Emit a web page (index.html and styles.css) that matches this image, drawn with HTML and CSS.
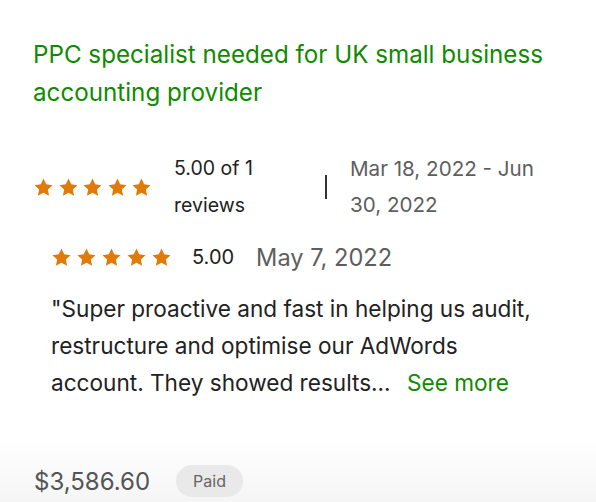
FILE: index.html
```html
<!DOCTYPE html>
<html>
<head>
<meta charset="utf-8">
<link rel="stylesheet" href="styles.css">
</head>
<body>
<div class="card">
  <h1 class="title">PPC specialist needed for UK small business accounting provider</h1>

  <div class="summary">
    <div class="stars stars-lg" aria-label="5 stars">
      <svg viewBox="0 0 24 24"><path d="M12 1.8l3.1 6.6 7.2.9-5.3 5 1.4 7.1L12 17.9l-6.4 3.5 1.4-7.1-5.3-5 7.2-.9z"/></svg>
      <svg viewBox="0 0 24 24"><path d="M12 1.8l3.1 6.6 7.2.9-5.3 5 1.4 7.1L12 17.9l-6.4 3.5 1.4-7.1-5.3-5 7.2-.9z"/></svg>
      <svg viewBox="0 0 24 24"><path d="M12 1.8l3.1 6.6 7.2.9-5.3 5 1.4 7.1L12 17.9l-6.4 3.5 1.4-7.1-5.3-5 7.2-.9z"/></svg>
      <svg viewBox="0 0 24 24"><path d="M12 1.8l3.1 6.6 7.2.9-5.3 5 1.4 7.1L12 17.9l-6.4 3.5 1.4-7.1-5.3-5 7.2-.9z"/></svg>
      <svg viewBox="0 0 24 24"><path d="M12 1.8l3.1 6.6 7.2.9-5.3 5 1.4 7.1L12 17.9l-6.4 3.5 1.4-7.1-5.3-5 7.2-.9z"/></svg>
    </div>
    <div class="score">5.00 of 1 reviews</div>
    <div class="divider"></div>
    <div class="range">Mar 18, 2022 - Jun 30, 2022</div>
  </div>

  <div class="review">
    <div class="review-head">
      <div class="stars stars-sm" aria-label="5 stars">
        <svg viewBox="0 0 24 24"><path d="M12 1.8l3.1 6.6 7.2.9-5.3 5 1.4 7.1L12 17.9l-6.4 3.5 1.4-7.1-5.3-5 7.2-.9z"/></svg>
        <svg viewBox="0 0 24 24"><path d="M12 1.8l3.1 6.6 7.2.9-5.3 5 1.4 7.1L12 17.9l-6.4 3.5 1.4-7.1-5.3-5 7.2-.9z"/></svg>
        <svg viewBox="0 0 24 24"><path d="M12 1.8l3.1 6.6 7.2.9-5.3 5 1.4 7.1L12 17.9l-6.4 3.5 1.4-7.1-5.3-5 7.2-.9z"/></svg>
        <svg viewBox="0 0 24 24"><path d="M12 1.8l3.1 6.6 7.2.9-5.3 5 1.4 7.1L12 17.9l-6.4 3.5 1.4-7.1-5.3-5 7.2-.9z"/></svg>
        <svg viewBox="0 0 24 24"><path d="M12 1.8l3.1 6.6 7.2.9-5.3 5 1.4 7.1L12 17.9l-6.4 3.5 1.4-7.1-5.3-5 7.2-.9z"/></svg>
      </div>
      <span class="rating">5.00</span>
      <span class="date">May 7, 2022</span>
    </div>
    <p class="quote">"Super proactive and fast in helping us audit, restructure and optimise our AdWords account. They showed results... <a class="more" href="#">See more</a></p>
  </div>

  <div class="footer">
    <span class="price">$3,586.60</span>
    <span class="badge">Paid</span>
  </div>
</div>
</body>
</html>
```

FILE: styles.css
```css
html, body {
  margin: 0;
  padding: 0;
  background: #ffffff;
}

body {
  font-family: Inter, "Liberation Sans", Arial, sans-serif;
  color: #222222;
  width: 596px;
  height: 502px;
  overflow: hidden;
}

.card {
  padding: 36px 0 0 33px;
  height: 466px;
  position: relative;
}

.title {
  margin: 0;
  font-size: 24.2px;
  line-height: 38px;
  font-weight: 400;
  color: #108a00;
  width: 545px;
}

.summary {
  display: flex;
  align-items: center;
  margin-top: 38px;
}

.stars {
  display: flex;
}

.stars svg {
  fill: #e07b0a;
  display: block;
}

.stars-lg {
  gap: 3.5px;
  margin-right: 22px;
}

.stars-lg svg,
.stars-sm svg {
  width: 21px;
  height: 21px;
}

.score {
  font-size: 19.5px;
  line-height: 37px;
  width: 128px;
  color: #222222;
}

.divider {
  width: 2px;
  height: 24px;
  background: #333333;
  margin: 0 23px 0 23px;
}

.range {
  font-size: 20.6px;
  line-height: 36px;
  width: 205px;
  color: #5e5e5e;
}

.review {
  padding-left: 18px;
  margin-top: 13px;
}

.review-head {
  display: flex;
  align-items: center;
  height: 40px;
}

.stars-sm {
  gap: 4px;
  margin-right: 20px;
}

.rating {
  font-size: 20px;
  color: #222222;
  margin-right: 22px;
}

.date {
  font-size: 23.6px;
  color: #5e5e5e;
}

.quote {
  margin: 13px 0 0 0;
  font-size: 22.6px;
  line-height: 37px;
  color: #222222;
  width: 502px;
}

.more {
  color: #108a00;
  text-decoration: none;
  margin-left: 10px;
}

.footer {
  position: absolute;
  left: 0;
  right: 0;
  bottom: 0;
  height: 62px;
  padding-left: 34px;
  display: flex;
  align-items: center;
  gap: 26px;
  background: linear-gradient(to bottom, rgba(255,255,255,1) 0%, #f5f5f5 100%);
}

.price {
  font-size: 24px;
  color: #555555;
  margin-top: 20px;
}

.badge {
  font-size: 16px;
  color: #666666;
  background: #e9e9e9;
  border-radius: 16px;
  height: 32px;
  line-height: 32px;
  padding: 0 17px;
  margin-top: 20px;
}
```
